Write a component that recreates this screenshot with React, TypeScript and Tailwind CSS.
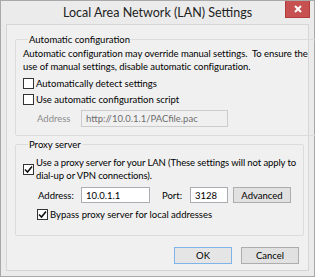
const Check = ({ checked }: { checked?: boolean }) => (
  <span className="w-[11px] h-[11px] shrink-0 border border-[#333333] bg-white flex items-center justify-center">
    {checked && (
      <svg width="9" height="9" viewBox="0 0 9 9">
        <path d="M1 4.5 L3.5 7 L8 1.5" fill="none" stroke="#111" strokeWidth="1.6" />
      </svg>
    )}
  </span>
);

const App = () => {
  return (
    <div className="w-[315px] h-[277px] bg-[#ebebeb] border border-[#a8a8a8] flex flex-col font-['Lato',sans-serif] text-[9.5px] leading-[13px] text-black">
      <div className="h-[23px] shrink-0 flex items-center justify-center relative">
        <span className="text-[12.5px] text-[#222]">Local Area Network (LAN) Settings</span>
        <div className="absolute right-[4px] top-0 w-[25px] h-[17px] bg-[#c75050] border border-[#b43b3b] border-t-0 flex items-center justify-center">
          <svg width="8" height="8" viewBox="0 0 8 8">
            <path d="M1 1 L7 7 M7 1 L1 7" stroke="#fff" strokeWidth="2" />
          </svg>
        </div>
      </div>

      <div className="mx-[5px] h-[247px] shrink-0 border border-[#d6d6d6] bg-[#f0f0f0] px-[8px] flex flex-col">
        <fieldset className="mt-[8px] border border-[#dcdcdc] rounded-[2px] px-[7px] pb-[8px]">
          <legend className="ml-[5px] px-[1px]">Automatic configuration</legend>
          <p className="pt-[1px] whitespace-nowrap tracking-[-0.05px]">
            Automatic configuration may override manual settings.&nbsp; To ensure the
            <br />
            use of manual settings, disable automatic configuration.
          </p>
          <div className="mt-[4px] flex items-center gap-[2px]">
            <Check />
            <span>Automatically detect settings</span>
          </div>
          <div className="mt-[3px] flex items-center gap-[2px]">
            <Check />
            <span>Use automatic configuration script</span>
          </div>
          <div className="mt-[4px] flex items-center">
            <span className="w-[58px] pl-[14px] text-[#8d8d8d]">Address</span>
            <div className="w-[147px] h-[17px] border border-[#cccccc] bg-[#f0f0f0] flex items-center px-[4px] text-[#6d6d6d]">
              http://10.0.1.1/PACfile.pac
            </div>
          </div>
        </fieldset>

        <fieldset className="mt-[2px] border border-[#dcdcdc] rounded-[2px] px-[7px] pb-[14px]">
          <legend className="ml-[5px] px-[1px]">Proxy server</legend>
          <div className="pt-[5px] flex items-center gap-[2px]">
            <Check checked />
            <span className="whitespace-nowrap tracking-[-0.1px]">
              Use a proxy server for your LAN (These settings will not apply to
              <br />
              dial-up or VPN connections).
            </span>
          </div>
          <div className="mt-[5px] flex items-center">
            <span className="w-[58px] pl-[15px]">Address:</span>
            <div className="w-[69px] h-[16px] border border-[#abadb3] bg-white flex items-center px-[4px]">10.0.1.1</div>
            <span className="ml-[12px] w-[28px]">Port:</span>
            <div className="w-[38px] h-[16px] border border-[#abadb3] bg-white flex items-center px-[4px]">3128</div>
            <button className="ml-[5px] w-[58px] h-[16px] border border-[#adadad] bg-[#e1e1e1] flex items-center justify-center">
              Advanced
            </button>
          </div>
          <div className="mt-[5px] pl-[14px] flex items-center gap-[2px]">
            <Check checked />
            <span>Bypass proxy server for local addresses</span>
          </div>
        </fieldset>

        <div className="mt-[11px] mr-[1px] flex justify-end gap-[9px]">
          <button className="w-[58px] h-[17px] border border-[#7eb4ea] bg-[#e5e5e5] flex items-center justify-center">
            OK
          </button>
          <button className="w-[58px] h-[17px] border border-[#adadad] bg-[#e1e1e1] flex items-center justify-center">
            Cancel
          </button>
        </div>
      </div>
    </div>
  );
};

export default App;
